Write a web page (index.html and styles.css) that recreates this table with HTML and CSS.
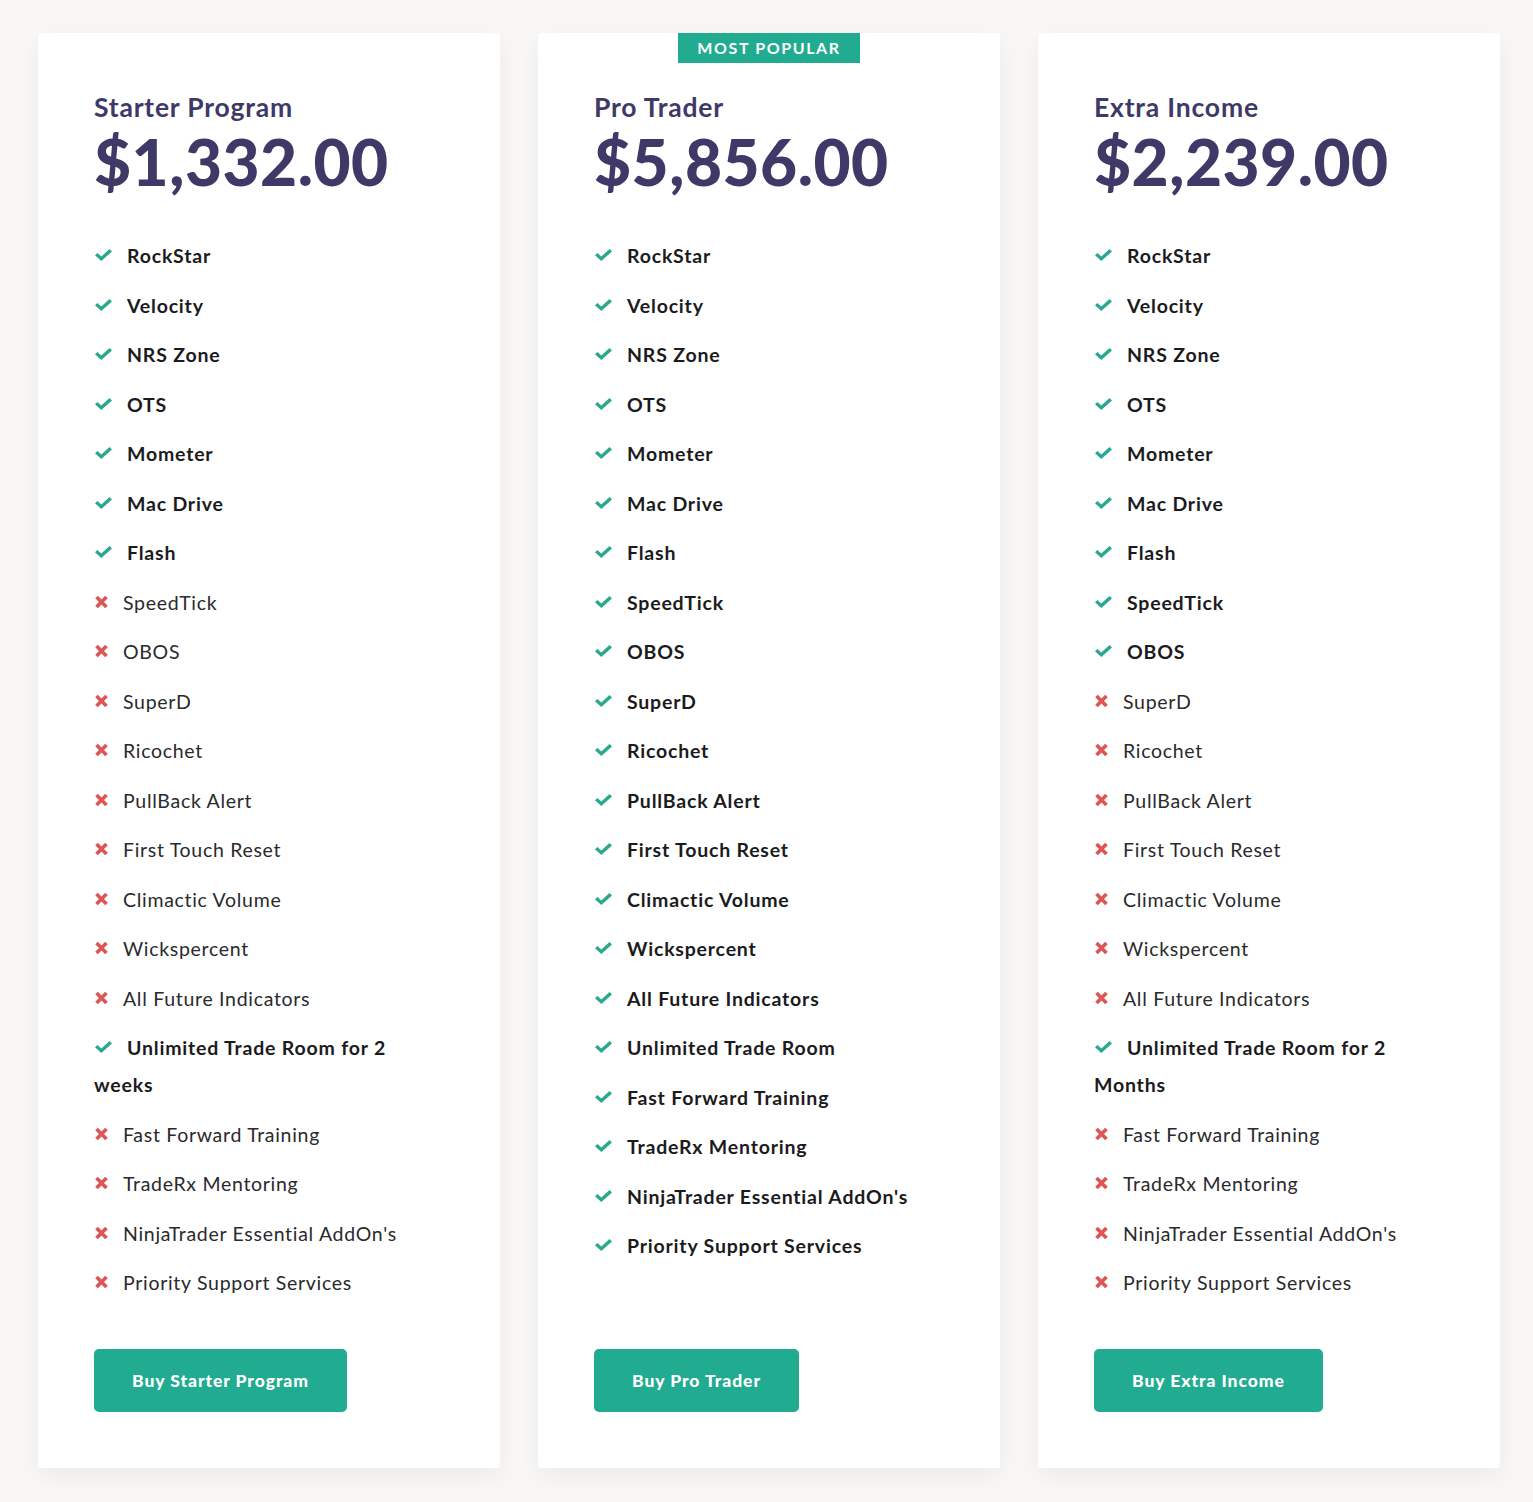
FILE: index.html
```html
<!doctype html>
<html lang="en">
<head>
  <meta charset="UTF-8">
  <title>Pricing</title>
  <meta name="viewport" content="width=device-width, initial-scale=1.0">
  <link rel="stylesheet" href="styles.css">
</head>
<body>

  <div class="pricing">

    <div class="card">
      <h2 class="plan">Starter Program</h2>
      <div class="price">$1,332.00</div>
      <ul class="features">
        <li class="yes"><svg class="ic-check" viewBox="0 0 17 12"><path d="M0 6.3 L2.4 3.9 L6.3 7.6 L14.5 0 L17 2.4 L6.3 12 Z"/></svg>RockStar</li>
        <li class="yes"><svg class="ic-check" viewBox="0 0 17 12"><path d="M0 6.3 L2.4 3.9 L6.3 7.6 L14.5 0 L17 2.4 L6.3 12 Z"/></svg>Velocity</li>
        <li class="yes"><svg class="ic-check" viewBox="0 0 17 12"><path d="M0 6.3 L2.4 3.9 L6.3 7.6 L14.5 0 L17 2.4 L6.3 12 Z"/></svg>NRS Zone</li>
        <li class="yes"><svg class="ic-check" viewBox="0 0 17 12"><path d="M0 6.3 L2.4 3.9 L6.3 7.6 L14.5 0 L17 2.4 L6.3 12 Z"/></svg>OTS</li>
        <li class="yes"><svg class="ic-check" viewBox="0 0 17 12"><path d="M0 6.3 L2.4 3.9 L6.3 7.6 L14.5 0 L17 2.4 L6.3 12 Z"/></svg>Mometer</li>
        <li class="yes"><svg class="ic-check" viewBox="0 0 17 12"><path d="M0 6.3 L2.4 3.9 L6.3 7.6 L14.5 0 L17 2.4 L6.3 12 Z"/></svg>Mac Drive</li>
        <li class="yes"><svg class="ic-check" viewBox="0 0 17 12"><path d="M0 6.3 L2.4 3.9 L6.3 7.6 L14.5 0 L17 2.4 L6.3 12 Z"/></svg>Flash</li>
        <li class="no"><svg class="ic-cross" viewBox="0 0 13 12"><path d="M1.5 1 L11.5 11 M11.5 1 L1.5 11"/></svg>SpeedTick</li>
        <li class="no"><svg class="ic-cross" viewBox="0 0 13 12"><path d="M1.5 1 L11.5 11 M11.5 1 L1.5 11"/></svg>OBOS</li>
        <li class="no"><svg class="ic-cross" viewBox="0 0 13 12"><path d="M1.5 1 L11.5 11 M11.5 1 L1.5 11"/></svg>SuperD</li>
        <li class="no"><svg class="ic-cross" viewBox="0 0 13 12"><path d="M1.5 1 L11.5 11 M11.5 1 L1.5 11"/></svg>Ricochet</li>
        <li class="no"><svg class="ic-cross" viewBox="0 0 13 12"><path d="M1.5 1 L11.5 11 M11.5 1 L1.5 11"/></svg>PullBack Alert</li>
        <li class="no"><svg class="ic-cross" viewBox="0 0 13 12"><path d="M1.5 1 L11.5 11 M11.5 1 L1.5 11"/></svg>First Touch Reset</li>
        <li class="no"><svg class="ic-cross" viewBox="0 0 13 12"><path d="M1.5 1 L11.5 11 M11.5 1 L1.5 11"/></svg>Climactic Volume</li>
        <li class="no"><svg class="ic-cross" viewBox="0 0 13 12"><path d="M1.5 1 L11.5 11 M11.5 1 L1.5 11"/></svg>Wickspercent</li>
        <li class="no"><svg class="ic-cross" viewBox="0 0 13 12"><path d="M1.5 1 L11.5 11 M11.5 1 L1.5 11"/></svg>All Future Indicators</li>
        <li class="yes"><svg class="ic-check" viewBox="0 0 17 12"><path d="M0 6.3 L2.4 3.9 L6.3 7.6 L14.5 0 L17 2.4 L6.3 12 Z"/></svg>Unlimited Trade Room for 2 weeks</li>
        <li class="no"><svg class="ic-cross" viewBox="0 0 13 12"><path d="M1.5 1 L11.5 11 M11.5 1 L1.5 11"/></svg>Fast Forward Training</li>
        <li class="no"><svg class="ic-cross" viewBox="0 0 13 12"><path d="M1.5 1 L11.5 11 M11.5 1 L1.5 11"/></svg>TradeRx Mentoring</li>
        <li class="no"><svg class="ic-cross" viewBox="0 0 13 12"><path d="M1.5 1 L11.5 11 M11.5 1 L1.5 11"/></svg>NinjaTrader Essential AddOn's</li>
        <li class="no"><svg class="ic-cross" viewBox="0 0 13 12"><path d="M1.5 1 L11.5 11 M11.5 1 L1.5 11"/></svg>Priority Support Services</li>
      </ul>
      <a class="buy" href="#">Buy Starter Program</a>
    </div>

    <div class="card popular">
      <span class="badge">MOST POPULAR</span>
      <h2 class="plan">Pro Trader</h2>
      <div class="price">$5,856.00</div>
      <ul class="features">
        <li class="yes"><svg class="ic-check" viewBox="0 0 17 12"><path d="M0 6.3 L2.4 3.9 L6.3 7.6 L14.5 0 L17 2.4 L6.3 12 Z"/></svg>RockStar</li>
        <li class="yes"><svg class="ic-check" viewBox="0 0 17 12"><path d="M0 6.3 L2.4 3.9 L6.3 7.6 L14.5 0 L17 2.4 L6.3 12 Z"/></svg>Velocity</li>
        <li class="yes"><svg class="ic-check" viewBox="0 0 17 12"><path d="M0 6.3 L2.4 3.9 L6.3 7.6 L14.5 0 L17 2.4 L6.3 12 Z"/></svg>NRS Zone</li>
        <li class="yes"><svg class="ic-check" viewBox="0 0 17 12"><path d="M0 6.3 L2.4 3.9 L6.3 7.6 L14.5 0 L17 2.4 L6.3 12 Z"/></svg>OTS</li>
        <li class="yes"><svg class="ic-check" viewBox="0 0 17 12"><path d="M0 6.3 L2.4 3.9 L6.3 7.6 L14.5 0 L17 2.4 L6.3 12 Z"/></svg>Mometer</li>
        <li class="yes"><svg class="ic-check" viewBox="0 0 17 12"><path d="M0 6.3 L2.4 3.9 L6.3 7.6 L14.5 0 L17 2.4 L6.3 12 Z"/></svg>Mac Drive</li>
        <li class="yes"><svg class="ic-check" viewBox="0 0 17 12"><path d="M0 6.3 L2.4 3.9 L6.3 7.6 L14.5 0 L17 2.4 L6.3 12 Z"/></svg>Flash</li>
        <li class="yes"><svg class="ic-check" viewBox="0 0 17 12"><path d="M0 6.3 L2.4 3.9 L6.3 7.6 L14.5 0 L17 2.4 L6.3 12 Z"/></svg>SpeedTick</li>
        <li class="yes"><svg class="ic-check" viewBox="0 0 17 12"><path d="M0 6.3 L2.4 3.9 L6.3 7.6 L14.5 0 L17 2.4 L6.3 12 Z"/></svg>OBOS</li>
        <li class="yes"><svg class="ic-check" viewBox="0 0 17 12"><path d="M0 6.3 L2.4 3.9 L6.3 7.6 L14.5 0 L17 2.4 L6.3 12 Z"/></svg>SuperD</li>
        <li class="yes"><svg class="ic-check" viewBox="0 0 17 12"><path d="M0 6.3 L2.4 3.9 L6.3 7.6 L14.5 0 L17 2.4 L6.3 12 Z"/></svg>Ricochet</li>
        <li class="yes"><svg class="ic-check" viewBox="0 0 17 12"><path d="M0 6.3 L2.4 3.9 L6.3 7.6 L14.5 0 L17 2.4 L6.3 12 Z"/></svg>PullBack Alert</li>
        <li class="yes"><svg class="ic-check" viewBox="0 0 17 12"><path d="M0 6.3 L2.4 3.9 L6.3 7.6 L14.5 0 L17 2.4 L6.3 12 Z"/></svg>First Touch Reset</li>
        <li class="yes"><svg class="ic-check" viewBox="0 0 17 12"><path d="M0 6.3 L2.4 3.9 L6.3 7.6 L14.5 0 L17 2.4 L6.3 12 Z"/></svg>Climactic Volume</li>
        <li class="yes"><svg class="ic-check" viewBox="0 0 17 12"><path d="M0 6.3 L2.4 3.9 L6.3 7.6 L14.5 0 L17 2.4 L6.3 12 Z"/></svg>Wickspercent</li>
        <li class="yes"><svg class="ic-check" viewBox="0 0 17 12"><path d="M0 6.3 L2.4 3.9 L6.3 7.6 L14.5 0 L17 2.4 L6.3 12 Z"/></svg>All Future Indicators</li>
        <li class="yes"><svg class="ic-check" viewBox="0 0 17 12"><path d="M0 6.3 L2.4 3.9 L6.3 7.6 L14.5 0 L17 2.4 L6.3 12 Z"/></svg>Unlimited Trade Room</li>
        <li class="yes"><svg class="ic-check" viewBox="0 0 17 12"><path d="M0 6.3 L2.4 3.9 L6.3 7.6 L14.5 0 L17 2.4 L6.3 12 Z"/></svg>Fast Forward Training</li>
        <li class="yes"><svg class="ic-check" viewBox="0 0 17 12"><path d="M0 6.3 L2.4 3.9 L6.3 7.6 L14.5 0 L17 2.4 L6.3 12 Z"/></svg>TradeRx Mentoring</li>
        <li class="yes"><svg class="ic-check" viewBox="0 0 17 12"><path d="M0 6.3 L2.4 3.9 L6.3 7.6 L14.5 0 L17 2.4 L6.3 12 Z"/></svg>NinjaTrader Essential AddOn's</li>
        <li class="yes"><svg class="ic-check" viewBox="0 0 17 12"><path d="M0 6.3 L2.4 3.9 L6.3 7.6 L14.5 0 L17 2.4 L6.3 12 Z"/></svg>Priority Support Services</li>
      </ul>
      <a class="buy" href="#">Buy Pro Trader</a>
    </div>

    <div class="card">
      <h2 class="plan">Extra Income</h2>
      <div class="price">$2,239.00</div>
      <ul class="features">
        <li class="yes"><svg class="ic-check" viewBox="0 0 17 12"><path d="M0 6.3 L2.4 3.9 L6.3 7.6 L14.5 0 L17 2.4 L6.3 12 Z"/></svg>RockStar</li>
        <li class="yes"><svg class="ic-check" viewBox="0 0 17 12"><path d="M0 6.3 L2.4 3.9 L6.3 7.6 L14.5 0 L17 2.4 L6.3 12 Z"/></svg>Velocity</li>
        <li class="yes"><svg class="ic-check" viewBox="0 0 17 12"><path d="M0 6.3 L2.4 3.9 L6.3 7.6 L14.5 0 L17 2.4 L6.3 12 Z"/></svg>NRS Zone</li>
        <li class="yes"><svg class="ic-check" viewBox="0 0 17 12"><path d="M0 6.3 L2.4 3.9 L6.3 7.6 L14.5 0 L17 2.4 L6.3 12 Z"/></svg>OTS</li>
        <li class="yes"><svg class="ic-check" viewBox="0 0 17 12"><path d="M0 6.3 L2.4 3.9 L6.3 7.6 L14.5 0 L17 2.4 L6.3 12 Z"/></svg>Mometer</li>
        <li class="yes"><svg class="ic-check" viewBox="0 0 17 12"><path d="M0 6.3 L2.4 3.9 L6.3 7.6 L14.5 0 L17 2.4 L6.3 12 Z"/></svg>Mac Drive</li>
        <li class="yes"><svg class="ic-check" viewBox="0 0 17 12"><path d="M0 6.3 L2.4 3.9 L6.3 7.6 L14.5 0 L17 2.4 L6.3 12 Z"/></svg>Flash</li>
        <li class="yes"><svg class="ic-check" viewBox="0 0 17 12"><path d="M0 6.3 L2.4 3.9 L6.3 7.6 L14.5 0 L17 2.4 L6.3 12 Z"/></svg>SpeedTick</li>
        <li class="yes"><svg class="ic-check" viewBox="0 0 17 12"><path d="M0 6.3 L2.4 3.9 L6.3 7.6 L14.5 0 L17 2.4 L6.3 12 Z"/></svg>OBOS</li>
        <li class="no"><svg class="ic-cross" viewBox="0 0 13 12"><path d="M1.5 1 L11.5 11 M11.5 1 L1.5 11"/></svg>SuperD</li>
        <li class="no"><svg class="ic-cross" viewBox="0 0 13 12"><path d="M1.5 1 L11.5 11 M11.5 1 L1.5 11"/></svg>Ricochet</li>
        <li class="no"><svg class="ic-cross" viewBox="0 0 13 12"><path d="M1.5 1 L11.5 11 M11.5 1 L1.5 11"/></svg>PullBack Alert</li>
        <li class="no"><svg class="ic-cross" viewBox="0 0 13 12"><path d="M1.5 1 L11.5 11 M11.5 1 L1.5 11"/></svg>First Touch Reset</li>
        <li class="no"><svg class="ic-cross" viewBox="0 0 13 12"><path d="M1.5 1 L11.5 11 M11.5 1 L1.5 11"/></svg>Climactic Volume</li>
        <li class="no"><svg class="ic-cross" viewBox="0 0 13 12"><path d="M1.5 1 L11.5 11 M11.5 1 L1.5 11"/></svg>Wickspercent</li>
        <li class="no"><svg class="ic-cross" viewBox="0 0 13 12"><path d="M1.5 1 L11.5 11 M11.5 1 L1.5 11"/></svg>All Future Indicators</li>
        <li class="yes"><svg class="ic-check" viewBox="0 0 17 12"><path d="M0 6.3 L2.4 3.9 L6.3 7.6 L14.5 0 L17 2.4 L6.3 12 Z"/></svg>Unlimited Trade Room for 2 Months</li>
        <li class="no"><svg class="ic-cross" viewBox="0 0 13 12"><path d="M1.5 1 L11.5 11 M11.5 1 L1.5 11"/></svg>Fast Forward Training</li>
        <li class="no"><svg class="ic-cross" viewBox="0 0 13 12"><path d="M1.5 1 L11.5 11 M11.5 1 L1.5 11"/></svg>TradeRx Mentoring</li>
        <li class="no"><svg class="ic-cross" viewBox="0 0 13 12"><path d="M1.5 1 L11.5 11 M11.5 1 L1.5 11"/></svg>NinjaTrader Essential AddOn's</li>
        <li class="no"><svg class="ic-cross" viewBox="0 0 13 12"><path d="M1.5 1 L11.5 11 M11.5 1 L1.5 11"/></svg>Priority Support Services</li>
      </ul>
      <a class="buy" href="#">Buy Extra Income</a>
    </div>

  </div>

</body>
</html>
```

FILE: styles.css
```css
body {
  font-family: 'Lato', 'Liberation Sans', sans-serif;
  margin: 0;
  background: #f8f7f5;
  color: #1d1d1f;
}

.pricing {
  display: flex;
  gap: 38px;
  padding: 33px 33px 33px 38px;
}

.card {
  position: relative;
  flex: 0 0 462px;
  box-sizing: border-box;
  display: flex;
  flex-direction: column;
  background: #fff;
  border-radius: 3px;
  padding: 59px 60px 56px 56px;
  box-shadow: 0 8px 24px rgba(0,0,0,0.05);
}

.badge {
  position: absolute;
  top: 0;
  left: 50%;
  transform: translateX(-50%);
  width: 182px;
  height: 30px;
  line-height: 30px;
  text-align: center;
  background: #21ab90;
  color: #fff;
  font-size: 16px;
  font-weight: 700;
  letter-spacing: 1.6px;
}

.plan {
  margin: 0;
  font-size: 26.5px;
  line-height: 30px;
  font-weight: 700;
  letter-spacing: 0.8px;
  color: #3e3966;
}

.price {
  margin-top: 5px;
  font-size: 64px;
  line-height: 70px;
  font-weight: 900;
  letter-spacing: 0.5px;
  color: #3e3966;
}

.features {
  list-style: none;
  margin: 40px 0 35px;
  padding: 0;
}
.features li {
  font-size: 19.5px;
  line-height: 37px;
  margin-bottom: 12.5px;
}
.features li.yes {
  font-weight: 700;
  letter-spacing: 0.8px;
  color: #1b1b1d;
}
.features li.no {
  font-weight: 400;
  letter-spacing: 0.7px;
  color: #2a2a2c;
}

.features svg {
  vertical-align: 2px;
}
.ic-check {
  width: 17px;
  height: 12px;
  margin: 0 15px 0 1px;
  fill: #2aa88f;
}
.ic-cross {
  width: 13px;
  height: 12px;
  margin: 0 15px 0 1px;
  fill: none;
  stroke: #dc5656;
  stroke-width: 3.6;
}

.buy {
  margin-top: auto;
  align-self: flex-start;
  display: inline-block;
  height: 63px;
  line-height: 63px;
  padding: 0 38px;
  background: #21ab90;
  color: #fff;
  border-radius: 5px;
  font-size: 17.5px;
  font-weight: 900;
  letter-spacing: 0.95px;
  text-decoration: none;
}
```
